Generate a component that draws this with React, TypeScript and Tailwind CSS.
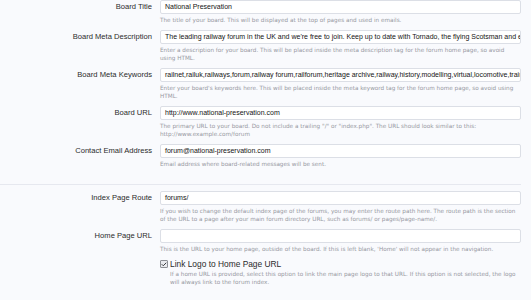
import { Check } from 'lucide-react';

type Field = {
  label: string;
  value: string;
  help: string;
};

const topFields: Field[] = [
  {
    label: 'Board Title',
    value: 'National Preservation',
    help: 'The title of your board. This will be displayed at the top of pages and used in emails.',
  },
  {
    label: 'Board Meta Description',
    value:
      "The leading railway forum in the UK and we're free to join. Keep up to date with Tornado, the flying Scotsman and everything else",
    help: 'Enter a description for your board. This will be placed inside the meta description tag for the forum home page, so avoid using HTML.',
  },
  {
    label: 'Board Meta Keywords',
    value:
      'railnet,railuk,railways,forum,railway forum,railforum,heritage archive,railway,history,modelling,virtual,locomotive,train,steam',
    help: "Enter your board's keywords here. This will be placed inside the meta keyword tag for the forum home page, so avoid using HTML.",
  },
  {
    label: 'Board URL',
    value: 'http://www.national-preservation.com',
    help: 'The primary URL to your board. Do not include a trailing "/" or "index.php". The URL should look similar to this: http://www.example.com/forum',
  },
  {
    label: 'Contact Email Address',
    value: 'forum@national-preservation.com',
    help: 'Email address where board-related messages will be sent.',
  },
];

const routeFields: Field[] = [
  {
    label: 'Index Page Route',
    value: 'forums/',
    help: 'If you wish to change the default index page of the forums, you may enter the route path here. The route path is the section of the URL to a page after your main forum directory URL, such as forums/ or pages/page-name/.',
  },
  {
    label: 'Home Page URL',
    value: '',
    help: "This is the URL to your home page, outside of the board. If this is left blank, 'Home' will not appear in the navigation.",
  },
];

function Row({ field }: { field: Field }) {
  return (
    <div className="flex mb-[6px]">
      <div className="w-[152px] shrink-0 text-right text-[7.6px] leading-[14px] text-[#2b2b2b]">
        {field.label}
      </div>
      <div className="ml-[8px] flex-1 min-w-0">
        <div className="h-[14px] bg-white border border-[#dcdfe6] rounded-[2px] px-[4px] overflow-hidden whitespace-nowrap text-[7px] leading-[12px] text-[#141414]">
          {field.value}
        </div>
        <p className="mt-[2px] font-['DejaVu_Sans',Verdana,sans-serif] text-[5.7px] leading-[8px] text-[#96989f]">
          {field.help}
        </p>
      </div>
    </div>
  );
}

export default function App() {
  return (
    <div className="w-[531px] h-[300px] overflow-hidden bg-[#f9fafd] pr-[10px] font-['Liberation_Sans',Arial,sans-serif]">
      <div className="pb-[10px] border-b border-[#e6e8ef]">
        {topFields.map((f) => (
          <Row key={f.label} field={f} />
        ))}
      </div>
      <div className="pt-[6px]">
        {routeFields.map((f) => (
          <Row key={f.label} field={f} />
        ))}
        <div className="flex">
          <div className="w-[152px] shrink-0" />
          <div className="ml-[8px] flex-1 min-w-0">
            <label className="flex items-center gap-[2px] h-[10px] text-[8.4px] text-[#2b2b2b]">
              <span className="w-[8px] h-[8px] rounded-[1px] border border-[#8d8f95] bg-[#e9eaee] flex items-center justify-center">
                <Check className="w-[7px] h-[7px] text-[#3a3b40]" strokeWidth={4} />
              </span>
              Link Logo to Home Page URL
            </label>
            <p className="pl-[10px] mt-[1px] font-['DejaVu_Sans',Verdana,sans-serif] text-[5.7px] leading-[8px] text-[#96989f]">
              If a home URL is provided, select this option to link the main page logo to that URL. If this option is not selected, the logo will always link to the forum index.
            </p>
          </div>
        </div>
      </div>
    </div>
  );
}
